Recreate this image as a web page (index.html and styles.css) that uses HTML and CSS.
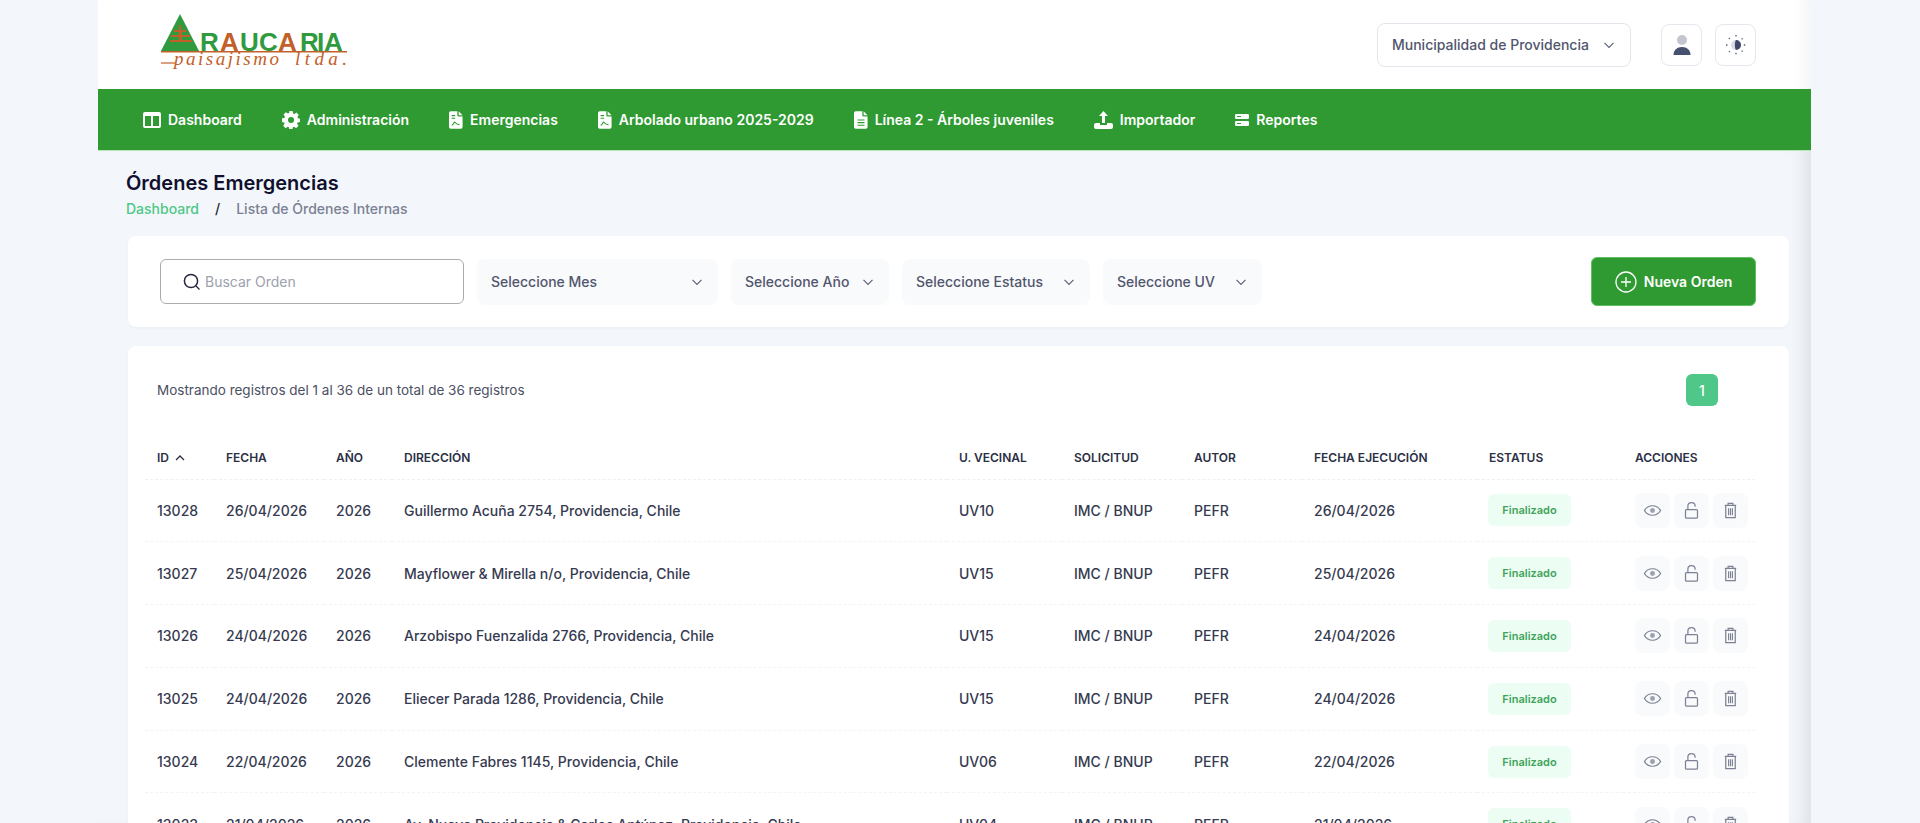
FILE: index.html
```html
<!DOCTYPE html>
<html lang="es">
<head>
<meta charset="utf-8">
<title>Órdenes Emergencias</title>
<link rel="stylesheet" href="styles.css">
</head>
<body>
<svg class="sprite" aria-hidden="true">
  <symbol id="i-eye" viewBox="0 0 20 20"><path d="M1.5 10C3.5 6.6 6.5 5 10 5s6.5 1.6 8.500 5c-2 3.400-5 5-8.500 5s-6.500-1.600-8.500-5Z" fill="none" stroke="currentColor" stroke-width="1.300"/><circle cx="10" cy="10" r="2.600" fill="currentColor" opacity=".75"/></symbol>
  <symbol id="i-lock" viewBox="0 0 20 20"><rect x="3.700" y="9" width="12.600" height="9" rx="1" fill="none" stroke="currentColor" stroke-width="1.300"/><path d="M6.200 9V5.200C6.200 3 8 1.700 10 1.700s3.800 1.300 3.800 3.500v.8" fill="none" stroke="currentColor" stroke-width="1.300"/></symbol>
  <symbol id="i-trash" viewBox="0 0 20 20"><path d="M4 4.500h12M7.500 4.500V2.500h5v2M5 4.500h10v13H5Z" fill="none" stroke="currentColor" stroke-width="1.300"/><path d="M8 7.500v7.500M10 7.500v7.500M12 7.500v7.500" stroke="currentColor" stroke-width="1.200"/></symbol>
  <symbol id="i-chev" viewBox="0 0 12 12"><path d="M1.500 3.800 6 8.300l4.500-4.500" fill="none" stroke="currentColor" stroke-width="1.200"/></symbol>
  <symbol id="i-doc" viewBox="0 0 16 20"><path d="M2 0h7.500v4.500a1.500 1.500 0 0 0 1.500 1.500h4.500v12a2 2 0 0 1-2 2H2a2 2 0 0 1-2-2V2a2 2 0 0 1 2-2ZM11 0l4.500 4.500H11Z" fill="#fff"/><path d="M3 5h4M3 8h4" stroke="#2e9a31" stroke-width="1.300"/><path d="M3 16c2 0 2.500-3.500 3.500-3.500s1 2.500 5.500 2.800" fill="none" stroke="#2e9a31" stroke-width="1.300"/></symbol>
</svg>

<div class="shell">
  <header class="topbar">
    <svg class="logo" viewBox="0 0 190 62" role="img" aria-label="Araucaria paisajismo ltda.">
      <path d="M1 38 20 1l19 37Z" fill="#2f9a3e"/>
      <path d="M19 12h2v5h5v2h-4v3h8v2h-8v3h10v2H10v-2h9v-3h-8v-2h8v-3h-5v-2h5Z" fill="#c2602a"/>
      <path d="M1 38h186v1.500H1Z" fill="#c2602a"/>
      <text class="logo-word" x="40 60 80 99 118 140 157 164" y="38"><tspan fill="#2f9a3e">R</tspan><tspan fill="#c2602a">A</tspan><tspan fill="#2f9a3e">U</tspan><tspan fill="#2f9a3e">C</tspan><tspan fill="#c2602a">A</tspan><tspan fill="#2f9a3e">R</tspan><tspan fill="#2f9a3e">I</tspan><tspan fill="#2f9a3e">A</tspan></text>
      <path d="M1 50h14" stroke="#c2602a" stroke-width="1.200"/>
      <text class="logo-script" x="14" y="52" textLength="105" lengthAdjust="spacing">paisajismo</text>
      <text class="logo-script" x="135" y="52" textLength="52" lengthAdjust="spacing">ltda.</text>
    </svg>
    <div class="top-actions">
      <div class="muni-select"><span class="muni-text">Municipalidad de Providencia</span><svg class="chev"><use href="#i-chev"/></svg></div>
      <button class="icon-box" aria-label="Usuario">
        <svg width="22" height="24" viewBox="0 0 22 24"><circle cx="11" cy="7" r="5" fill="#c3c6d0"/><path d="M2.500 22c0-5 3.500-8 8.500-8s8.500 3 8.500 8Z" fill="#46506f"/></svg>
      </button>
      <button class="icon-box" aria-label="Tema">
        <svg width="22" height="22" viewBox="0 0 22 22"><circle cx="11" cy="11" r="5" fill="#d9dbe3"/><path d="M11 6a5 5 0 0 1 0 10c-1.500-1.500-1.500-8.500 0-10Z" fill="#3f4668"/><path d="M11 1v2.200M11 18.800V21M1 11h2.200M18.800 11H21M3.900 3.900l1.500 1.500M16.600 16.600l1.500 1.500M3.900 18.100l1.500-1.500M16.600 5.400l1.500-1.500" stroke="#565c78" stroke-width="1.300" stroke-dasharray="1.400 1"/></svg>
      </button>
    </div>
  </header>

  <nav class="mainnav">
    <a class="nav-item"><svg width="18" height="16" viewBox="0 0 18 16"><path d="M2 0h14a2 2 0 0 1 2 2v12a2 2 0 0 1-2 2H2a2 2 0 0 1-2-2V2a2 2 0 0 1 2-2Zm0 4v10h6V4Zm8 0v10h6V4Z" fill="#fff" fill-rule="evenodd"/></svg>Dashboard</a>
    <a class="nav-item"><svg width="18" height="18" viewBox="0 0 18 18"><path d="M7.300 0h3.400l.4 2.400 1.300.6 2-1.400 2.400 2.400-1.400 2 .6 1.300 2 .4v3.400l-2.400.4-.5 1.300 1.400 2-2.400 2.400-2-1.400-1.300.5-.4 2.400H7.300l-.4-2.400-1.300-.5-2 1.400-2.400-2.400 1.400-2-.6-1.300-2-.4V7.300l2.400-.4.500-1.300-1.400-2 2.400-2.400 2 1.400 1.300-.6ZM9 6a3 3 0 1 0 0 6 3 3 0 0 0 0-6Z" fill="#fff" fill-rule="evenodd"/></svg>Administración</a>
    <a class="nav-item"><svg class="file-ico" width="14" height="18"><use href="#i-doc"/></svg>Emergencias</a>
    <a class="nav-item"><svg class="file-ico" width="14" height="18"><use href="#i-doc"/></svg>Arbolado urbano 2025-2029</a>
    <a class="nav-item"><svg class="file-ico" width="14" height="18" viewBox="0 0 16 20"><path d="M2 0h7.500v4.500a1.500 1.500 0 0 0 1.500 1.500h4.500v12a2 2 0 0 1-2 2H2a2 2 0 0 1-2-2V2a2 2 0 0 1 2-2ZM11 0l4.500 4.500H11Z" fill="#fff"/><path d="M4 10h8M4 13h8M4 16h8" stroke="#2e9a31" stroke-width="1.300"/></svg>Línea 2 - Árboles juveniles</a>
    <a class="nav-item"><svg width="19" height="18" viewBox="0 0 19 18"><path d="M9.500 0 14 5h-3v7H8V5H5ZM2 12h4v2h7v-2h4a2 2 0 0 1 2 2v2a2 2 0 0 1-2 2H2a2 2 0 0 1-2-2v-2a2 2 0 0 1 2-2Z" fill="#fff"/></svg>Importador</a>
    <a class="nav-item"><svg width="14" height="12" viewBox="0 0 14 12"><rect width="14" height="5" rx="1.200" fill="#fff"/><rect y="7" width="14" height="5" rx="1.200" fill="#fff"/><path d="M2 2.500h4M2 9.500h4" stroke="#2e9a31"/></svg>Reportes</a>
  </nav>

  <main class="page">
    <div class="page-head">
      <h1 class="page-title">Órdenes Emergencias</h1>
      <div class="crumbs"><a class="crumb-link">Dashboard</a><span class="crumb-sep">/</span><span class="crumb-here">Lista de Órdenes Internas</span></div>
    </div>

    <section class="card filters">
      <label class="search">
        <svg width="20" height="20" viewBox="0 0 20 20"><circle cx="9" cy="9" r="6.600" fill="none" stroke="#25283d" stroke-width="1.500"/><path d="m14 14 3.500 3.500" stroke="#25283d" stroke-width="1.200"/></svg>
        <span class="search-ph">Buscar Orden</span>
      </label>
      <div class="select select-mes"><span class="select-text">Seleccione Mes</span><svg class="chev"><use href="#i-chev"/></svg></div>
      <div class="select select-ano"><span class="select-text">Seleccione Año</span><svg class="chev"><use href="#i-chev"/></svg></div>
      <div class="select select-est"><span class="select-text">Seleccione Estatus</span><svg class="chev"><use href="#i-chev"/></svg></div>
      <div class="select select-uv"><span class="select-text">Seleccione UV</span><svg class="chev"><use href="#i-chev"/></svg></div>
      <button class="btn-new">
        <svg width="22" height="22" viewBox="0 0 22 22"><circle cx="11" cy="11" r="10" fill="none" stroke="#fff" stroke-width="1.300"/><path d="M11 6v10M6 11h10" stroke="#fff" stroke-width="1.300"/></svg>
        Nueva Orden
      </button>
    </section>

    <section class="card listing">
      <div class="list-info">
        <span class="info-text">Mostrando registros del 1 al 36 de un total de 36 registros</span>
        <span class="page-btn">1</span>
      </div>
      <table class="orders">
        <colgroup>
          <col class="c-id"><col class="c-date"><col class="c-year"><col class="c-addr"><col class="c-uv"><col class="c-sol"><col class="c-aut"><col class="c-exec"><col class="c-st"><col class="c-act">
        </colgroup>
        <thead>
          <tr><th>ID <svg class="sort" width="10" height="8" viewBox="0 0 10 8"><path d="M1 6 5 2l4 4" fill="none" stroke="currentColor" stroke-width="1.300"/></svg></th><th>Fecha</th><th>Año</th><th>Dirección</th><th>U. Vecinal</th><th>Solicitud</th><th>Autor</th><th>Fecha Ejecución</th><th>Estatus</th><th>Acciones</th></tr>
        </thead>
        <tbody>
          <tr><td>13028</td><td>26/04/2026</td><td>2026</td><td>Guillermo Acuña 2754, Providencia, Chile</td><td>UV10</td><td>IMC / BNUP</td><td>PEFR</td><td>26/04/2026</td><td><span class="badge">Finalizado</span></td><td><div class="acts"><span class="act"><svg><use href="#i-eye"/></svg></span><span class="act"><svg><use href="#i-lock"/></svg></span><span class="act"><svg><use href="#i-trash"/></svg></span></div></td></tr>
          <tr><td>13027</td><td>25/04/2026</td><td>2026</td><td>Mayflower &amp; Mirella n/o, Providencia, Chile</td><td>UV15</td><td>IMC / BNUP</td><td>PEFR</td><td>25/04/2026</td><td><span class="badge">Finalizado</span></td><td><div class="acts"><span class="act"><svg><use href="#i-eye"/></svg></span><span class="act"><svg><use href="#i-lock"/></svg></span><span class="act"><svg><use href="#i-trash"/></svg></span></div></td></tr>
          <tr><td>13026</td><td>24/04/2026</td><td>2026</td><td>Arzobispo Fuenzalida 2766, Providencia, Chile</td><td>UV15</td><td>IMC / BNUP</td><td>PEFR</td><td>24/04/2026</td><td><span class="badge">Finalizado</span></td><td><div class="acts"><span class="act"><svg><use href="#i-eye"/></svg></span><span class="act"><svg><use href="#i-lock"/></svg></span><span class="act"><svg><use href="#i-trash"/></svg></span></div></td></tr>
          <tr><td>13025</td><td>24/04/2026</td><td>2026</td><td>Eliecer Parada 1286, Providencia, Chile</td><td>UV15</td><td>IMC / BNUP</td><td>PEFR</td><td>24/04/2026</td><td><span class="badge">Finalizado</span></td><td><div class="acts"><span class="act"><svg><use href="#i-eye"/></svg></span><span class="act"><svg><use href="#i-lock"/></svg></span><span class="act"><svg><use href="#i-trash"/></svg></span></div></td></tr>
          <tr><td>13024</td><td>22/04/2026</td><td>2026</td><td>Clemente Fabres 1145, Providencia, Chile</td><td>UV06</td><td>IMC / BNUP</td><td>PEFR</td><td>22/04/2026</td><td><span class="badge">Finalizado</span></td><td><div class="acts"><span class="act"><svg><use href="#i-eye"/></svg></span><span class="act"><svg><use href="#i-lock"/></svg></span><span class="act"><svg><use href="#i-trash"/></svg></span></div></td></tr>
          <tr><td>13023</td><td>21/04/2026</td><td>2026</td><td>Av. Nueva Providencia &amp; Carlos Antúnez, Providencia, Chile</td><td>UV04</td><td>IMC / BNUP</td><td>PEFR</td><td>21/04/2026</td><td><span class="badge">Finalizado</span></td><td><div class="acts"><span class="act"><svg><use href="#i-eye"/></svg></span><span class="act"><svg><use href="#i-lock"/></svg></span><span class="act"><svg><use href="#i-trash"/></svg></span></div></td></tr>
        </tbody>
      </table>
    </section>
  </main>
</div>
</body>
</html>
```

FILE: styles.css
```css
* { box-sizing: border-box; }
html, body { height: 100%; overflow: hidden; }
body {
  margin: 0;
  background: #f3f7fb;
  font-family: Inter, "Liberation Sans", sans-serif;
  color: #363a50;
}
.sprite { display: none; }

.shell { width: 1713px; margin-left: 98px; }

/* Top bar */
.topbar {
  height: 89px;
  display: flex;
  align-items: center;
  justify-content: space-between;
  padding: 0 55px 0 62px;
  background: #fff;
  box-shadow: inset -14px 0 14px -8px rgba(20, 30, 60, .05);
}
.logo { width: 190px; height: 62px; margin-top: 13px; margin-bottom: auto; }
.logo-word { font: 700 26px "Liberation Sans", sans-serif; }
.logo-script { font: italic 400 19px "Liberation Serif", serif; fill: #c2602a; }
.top-actions { display: flex; align-items: center; }
.muni-select {
  width: 254px;
  height: 44px;
  display: flex;
  align-items: center;
  justify-content: space-between;
  padding: 0 15px 0 14px;
  border: 1px solid #e3e5ec;
  border-radius: 8px;
  margin-right: 30px;
  font-size: 14px;
  font-weight: 500;
  color: #51566e;
}
.muni-text { width: 199px; overflow: hidden; white-space: nowrap; }
.chev { width: 12px; height: 12px; flex: none; color: #5d6279; }
.icon-box {
  width: 41px;
  height: 42px;
  padding: 0;
  display: flex;
  align-items: center;
  justify-content: center;
  background: #fff;
  border: 1px solid #e5e7ee;
  border-radius: 8px;
}
.icon-box + .icon-box { margin-left: 13px; }

/* Nav */
.mainnav {
  height: 62px;
  display: flex;
  align-items: center;
  gap: 40px;
  padding-left: 45px;
  background: #2e9a31;
  border-bottom: 1px solid #b9e7bb;
}
.nav-item {
  display: flex;
  align-items: center;
  gap: 7px;
  color: #fff;
  font-size: 14px;
  font-weight: 600;
  white-space: nowrap;
}
.nav-item svg { flex: none; }

/* Page */
.page {
  height: 672px;
  padding-top: 18px;
  box-shadow: inset -16px 0 14px -8px rgba(30, 40, 70, .09);
}
.page-head { padding-left: 28px; margin-bottom: 17px; }
.page-title {
  margin: 0;
  font-size: 20px;
  line-height: 28px;
  font-weight: 600;
  color: #10102e;
}
.crumbs { display: flex; align-items: center; margin-top: 2px; font-size: 14px; line-height: 20px; font-weight: 500; }
.crumb-link { color: #4fc788; }
.crumb-sep { margin: 0 16px; color: #23263a; }
.crumb-here { color: #7b8092; }

.card {
  margin: 0 22px 0 30px;
  background: #fff;
  border-radius: 8px;
  box-shadow: 0 1px 3px rgba(30, 40, 70, .04);
}

/* Filters */
.filters {
  height: 91px;
  display: flex;
  align-items: center;
  padding: 0 33px 0 32px;
  gap: 13px;
}
.search {
  width: 304px;
  height: 45px;
  display: flex;
  align-items: center;
  gap: 3px;
  padding-left: 21px;
  border: 1px solid #aaacb0;
  border-radius: 6px;
}
.search-ph { font-size: 14px; color: #9ca1ad; }
.select {
  height: 46px;
  display: flex;
  align-items: center;
  justify-content: space-between;
  padding: 0 15px 0 14px;
  background: #f9fafb;
  border-radius: 8px;
  font-size: 14px;
  font-weight: 500;
  color: #51566e;
}
.select-text { white-space: nowrap; overflow: hidden; text-overflow: ellipsis; }
.select-mes { width: 241px; }
.select-ano { width: 158px; }
.select-ano .select-text { width: 105px; }
.select-est { width: 188px; }
.select-uv { width: 159px; }
.btn-new {
  width: 165px;
  height: 49px;
  margin-left: auto;
  display: flex;
  align-items: center;
  justify-content: center;
  gap: 7px;
  background: #2e9a31;
  border: 1px solid #5fbf62;
  border-radius: 6px;
  color: #fff;
  font: 600 14px Inter, "Liberation Sans", sans-serif;
}

/* List */
.listing { margin-top: 19px; padding-top: 28px; height: 500px; }
.list-info {
  height: 32px;
  display: flex;
  align-items: center;
  justify-content: space-between;
  padding: 0 71px 0 29px;
}
.info-text { font-size: 13.500px; color: #4b5063; }
.page-btn {
  width: 32px;
  height: 32px;
  display: flex;
  align-items: center;
  justify-content: center;
  background: #4fc788;
  border-radius: 6px;
  color: #fff;
  font-size: 14px;
  font-weight: 500;
}
.orders {
  table-layout: fixed;
  width: 1610px;
  margin: 31px 0 0 17px;
  border-collapse: collapse;
}
.c-id { width: 69px; }
.c-date { width: 110px; }
.c-year { width: 68px; }
.c-addr { width: 555px; }
.c-uv { width: 115px; }
.c-sol { width: 120px; }
.c-aut { width: 120px; }
.c-exec { width: 175px; }
.c-st { width: 146px; }
.c-act { width: 132px; }
.orders th {
  height: 42px;
  padding: 0 0 0 12px;
  text-align: left;
  text-transform: uppercase;
  font-size: 12px;
  font-weight: 600;
  color: #2b2f45;
  border-bottom: 1px dashed #eef0f3;
  white-space: nowrap;
}
.sort { margin-left: 3px; }
.orders td {
  height: 62.800px;
  padding: 0 0 0 12px;
  font-size: 14px;
  font-weight: 500;
  color: #363a50;
  border-bottom: 1px dashed #f3f4f6;
  white-space: nowrap;
}
.badge {
  display: inline-flex;
  align-items: center;
  justify-content: center;
  width: 83px;
  height: 32px;
  margin-left: -1px;
  background: #ecfdf3;
  border-radius: 6px;
  color: #3fa45a;
  font-size: 11px;
  font-weight: 600;
}
.acts { display: flex; gap: 4px; }
.act {
  width: 35px;
  height: 35px;
  display: flex;
  align-items: center;
  justify-content: center;
  background: #f9fafb;
  border-radius: 8px;
  color: #7c8195;
}
.act svg { width: 19px; height: 19px; }
```
